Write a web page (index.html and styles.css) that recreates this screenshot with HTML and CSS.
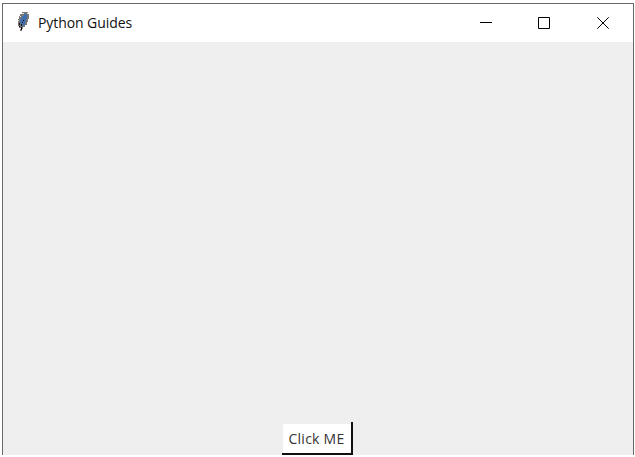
FILE: index.html
```
<!DOCTYPE html>
<html lang="en">
<head>
<meta charset="utf-8">
<title>Python Guides</title>
<link rel="stylesheet" href="styles.css">
</head>
<body>
<div class="window">
  <header class="titlebar">
    <svg class="feather" width="14" height="20" viewBox="0 0 14 20" shape-rendering="crispEdges">
      <path fill="#777" d="M8 0h4v2h1v5h-1v3h-1v3h-2v2h-2v2h-1v2h-2v-3h-1v-2h-1v-7h1v-3h1v-2h2v-2h2z"/>
      <path fill="#3f6fae" d="M8 2h3v5h-1v3h-1v3h-2v1h-2v-3h-1v-3h1v-2h1v-2h2z"/>
      <path fill="#e4e4e4" d="M6 1h2v1h-2zM4 4h1v1h-1zM2 8h1v1h-1zM11 1h1v1h-1zM4 16h1v1h-1zM9 13h1v1h-1z"/>
      <path fill="#111" d="M7 8h1v1h-1zM6 10h1v1h-1zM3 11h1v2h-1zM5 12h1v2h-1zM3 14h1v1h-1zM5 15h1v3h-1z"/>
    </svg>
    <span class="title">Python Guides</span>
    <div class="controls">
      <svg width="13" height="13" viewBox="0 0 13 13"><path d="M0 5.5h12"/></svg>
      <svg width="13" height="13" viewBox="0 0 13 13"><path d="M.5.5h11v11H.5z"/></svg>
      <svg class="close" width="13" height="13" viewBox="0 0 13 13"><path d="M.3.3l11.4 11.4M11.7.3L.3 11.7"/></svg>
    </div>
  </header>
  <main class="content">
    <button class="button">Click ME</button>
  </main>
</div>
</body>
</html>
```

FILE: styles.css
```
* {
  box-sizing: border-box;
}

body {
  margin: 0;
  background: #fff;
  font-family: "Open Sans", "Noto Sans", sans-serif;
}

.window {
  display: flex;
  flex-direction: column;
  width: 632px;
  height: 452px;
  margin: 3px 0 0 2px;
  border: 1px solid #696969;
  border-bottom: 0;
  background: #efefef;
}

.titlebar {
  display: flex;
  flex: none;
  align-items: center;
  height: 38px;
  padding: 0 23px 0 13px;
  background: #fff;
}

.feather {
  margin-top: -3px;
}

.title {
  display: block;
  width: 95px;
  margin-left: 8px;
  font-size: 14px;
  line-height: 20px;
  letter-spacing: -0.08px;
  white-space: nowrap;
  color: #111;
}

.controls {
  display: flex;
  gap: 45px;
  margin-left: auto;
}

.controls svg {
  fill: none;
  stroke: #000;
  stroke-width: 1;
}

.controls .close {
  margin-left: 1px;
}

.content {
  display: flex;
  flex: 1;
  align-items: flex-end;
  justify-content: center;
  padding-right: 1px;
}

.button {
  width: 71px;
  height: 33px;
  margin: 0;
  padding: 2px 0 0;
  border: solid #101010;
  border-width: 0 2px 2px 0;
  background: #fff;
  box-shadow: inset 1px 2px #efefef;
  color: #333;
  font: 14px/20px "Open Sans", "Noto Sans", sans-serif;
  letter-spacing: 0.25px;
  white-space: nowrap;
}
```
